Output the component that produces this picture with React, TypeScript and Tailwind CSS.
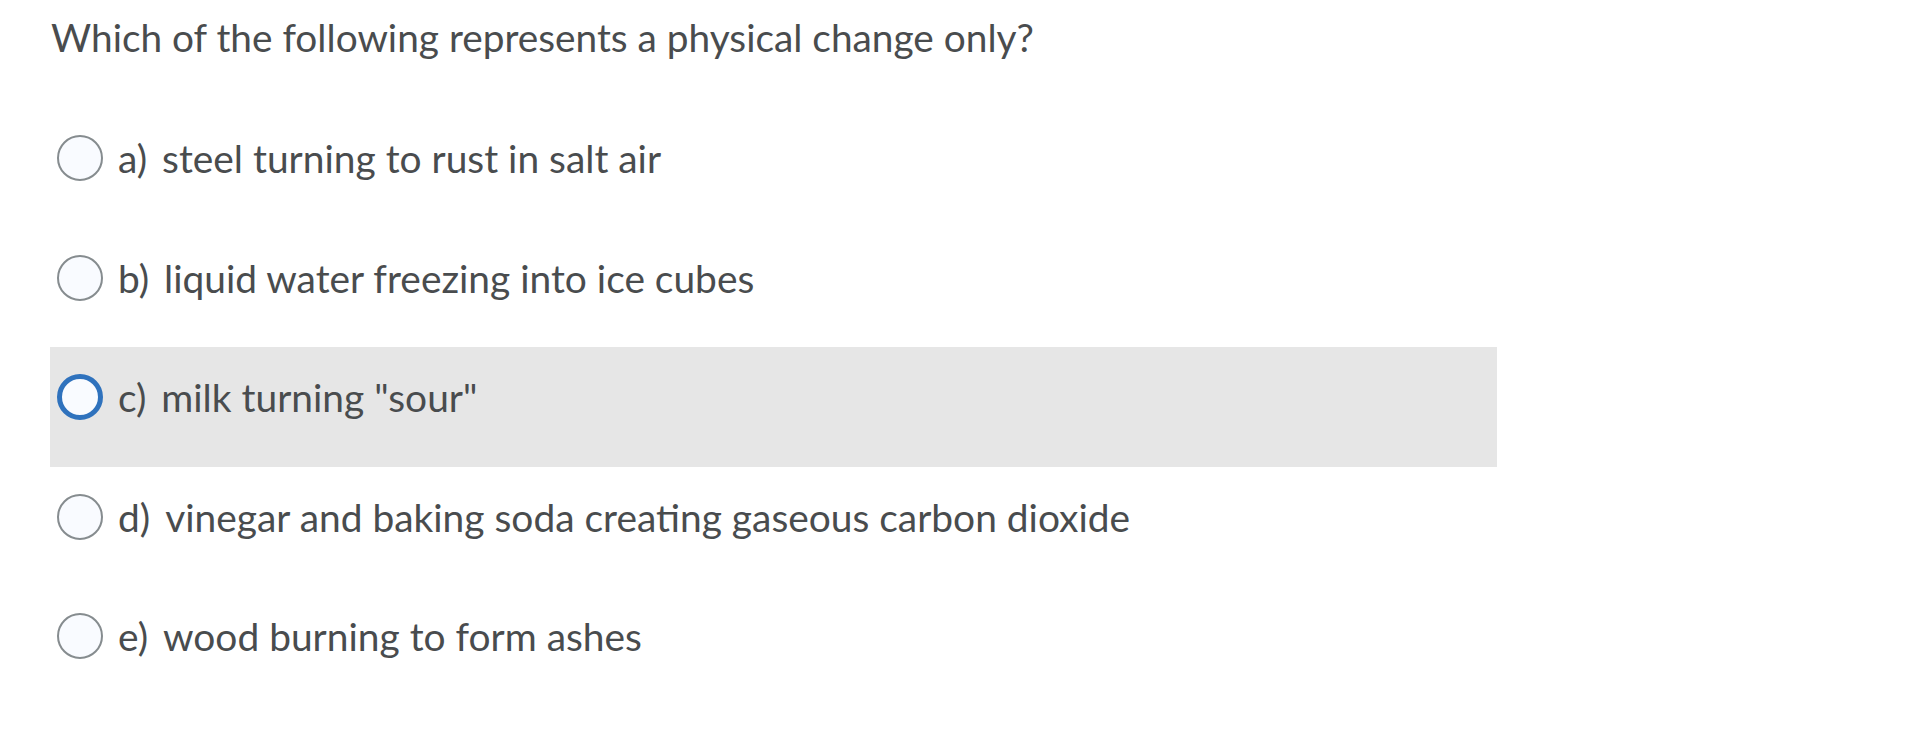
import * as React from 'react';

const options = [
  { id: 'a', label: 'a)', text: 'steel turning to rust in salt air' },
  { id: 'b', label: 'b)', text: 'liquid water freezing into ice cubes' },
  { id: 'c', label: 'c)', text: 'milk turning "sour"' },
  { id: 'd', label: 'd)', text: 'vinegar and baking soda creating gaseous carbon dioxide' },
  { id: 'e', label: 'e)', text: 'wood burning to form ashes' },
];

function Radio({ focused }: { focused: boolean }) {
  return (
    <span
      className={
        'block w-[46px] h-[46px] rounded-full bg-[#f9fbff] shrink-0 ' +
        (focused ? 'border-[5px] border-[#2f72bd]' : 'border-[2px] border-[#868c8f]')
      }
    />
  );
}

export default function App() {
  const [hovered] = React.useState('c');

  return (
    <div
      className="w-[1932px] h-[734px] bg-white text-[#494c4e] overflow-hidden"
      style={{ fontFamily: 'Lato, "Noto Sans", sans-serif' }}
    >
      <div className="pl-[51px] pt-[12px] h-[108px]">
        <p className="text-[38.8px] leading-[50px]">Which of the following represents a physical change only?</p>
      </div>

      <div className="w-[1497px]">
        {options.map((o) => (
          <div
            key={o.id}
            className={
              'h-[119.5px] pt-[27px] pl-[7px] ml-[50px] ' +
              (hovered === o.id ? 'bg-[#e6e6e6]' : '')
            }
          >
            <label className="flex items-center h-[46px]">
              <Radio focused={hovered === o.id} />
              <span className="ml-[15px] text-[38.9px] leading-[46px]">
                {o.label}
                <span className="ml-[15px]">{o.text}</span>
              </span>
            </label>
          </div>
        ))}
      </div>
    </div>
  );
}
